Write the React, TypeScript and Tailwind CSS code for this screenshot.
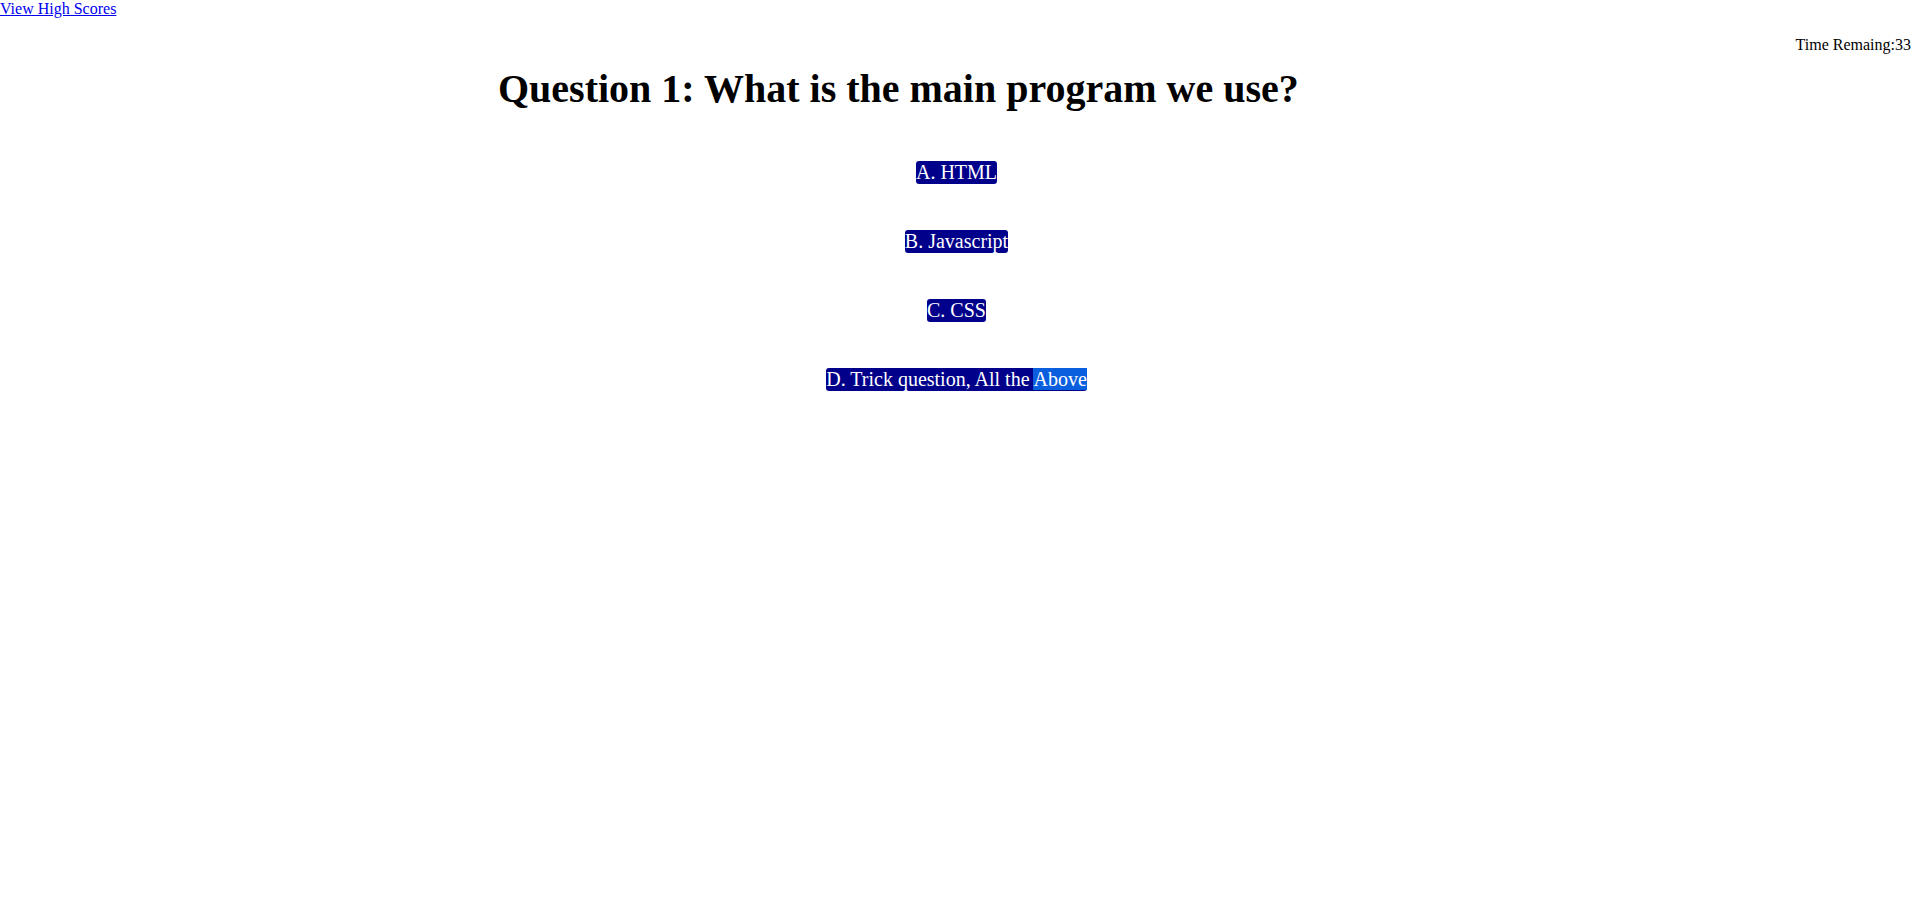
const ANSWERS = ["A. HTML", "B. Javascript", "C. CSS"];

export default function App() {
    return (
        <div className="min-h-[910px] bg-white text-black font-['Liberation_Serif','Times_New_Roman',serif]">
            <a href="#" className="block text-base leading-[18px] text-[#0000ee] underline w-fit">
                View High Scores
            </a>
            <div className="flex justify-end pr-[8px] mt-[18px] text-base leading-[18px]">
                <span>Time Remaing:33</span>
            </div>
            <h1 className="pl-[498px] mt-[12px] text-[40px] leading-[46px] font-bold">
                Question 1: What is the main program we use?
            </h1>
            <div className="flex flex-col items-center gap-[46px] mt-[49px] pr-[6px] text-[20px] leading-[23px] text-white">
                {ANSWERS.map((a) => (
                    <button key={a} className="bg-[#00008b] rounded-[3px] px-0 leading-[23px]">
                        {a}
                    </button>
                ))}
                <button className="bg-[#00008b] rounded-[3px] px-0 leading-[23px]">
                    D. Trick question, All the <span className="bg-[#0a5fdf]">Above</span>
                </button>
            </div>
        </div>
    );
}
